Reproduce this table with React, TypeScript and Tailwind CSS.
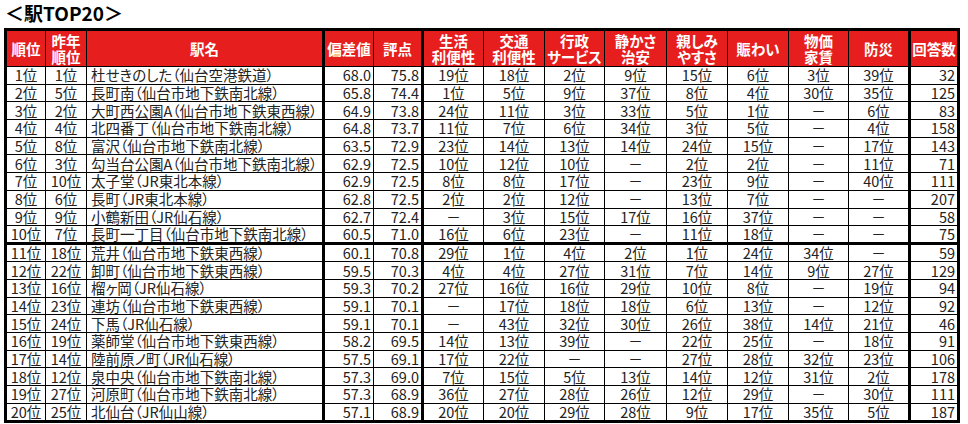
const rows: string[][] = [
  ["1位", "1位", "杜せきのした（仙台空港鉄道）", "68.0", "75.8", "19位", "18位", "2位", "9位", "15位", "6位", "3位", "39位", "32"],
  ["2位", "5位", "長町南（仙台市地下鉄南北線）", "65.8", "74.4", "1位", "5位", "9位", "37位", "8位", "4位", "30位", "35位", "125"],
  ["3位", "2位", "大町西公園A（仙台市地下鉄東西線）", "64.9", "73.8", "24位", "11位", "3位", "33位", "5位", "1位", "－", "6位", "83"],
  ["4位", "4位", "北四番丁（仙台市地下鉄南北線）", "64.8", "73.7", "11位", "7位", "6位", "34位", "3位", "5位", "－", "4位", "158"],
  ["5位", "8位", "富沢（仙台市地下鉄南北線）", "63.5", "72.9", "23位", "14位", "13位", "14位", "24位", "15位", "－", "17位", "143"],
  ["6位", "3位", "勾当台公園A（仙台市地下鉄南北線）", "62.9", "72.5", "10位", "12位", "10位", "－", "2位", "2位", "－", "11位", "71"],
  ["7位", "10位", "太子堂（JR東北本線）", "62.9", "72.5", "8位", "8位", "17位", "－", "23位", "9位", "－", "40位", "111"],
  ["8位", "6位", "長町（JR東北本線）", "62.8", "72.5", "2位", "2位", "12位", "－", "13位", "7位", "－", "－", "207"],
  ["9位", "9位", "小鶴新田（JR仙石線）", "62.7", "72.4", "－", "3位", "15位", "17位", "16位", "37位", "－", "－", "58"],
  ["10位", "7位", "長町一丁目（仙台市地下鉄南北線）", "60.5", "71.0", "16位", "6位", "23位", "－", "11位", "18位", "－", "－", "75"],
  ["11位", "18位", "荒井（仙台市地下鉄東西線）", "60.1", "70.8", "29位", "1位", "4位", "2位", "1位", "24位", "34位", "－", "59"],
  ["12位", "22位", "卸町（仙台市地下鉄東西線）", "59.5", "70.3", "4位", "4位", "27位", "31位", "7位", "14位", "9位", "27位", "129"],
  ["13位", "16位", "榴ヶ岡（JR仙石線）", "59.3", "70.2", "27位", "16位", "16位", "29位", "10位", "8位", "－", "19位", "94"],
  ["14位", "23位", "連坊（仙台市地下鉄東西線）", "59.1", "70.1", "－", "17位", "18位", "18位", "6位", "13位", "－", "12位", "92"],
  ["15位", "24位", "下馬（JR仙石線）", "59.1", "70.1", "－", "43位", "32位", "30位", "26位", "38位", "14位", "21位", "46"],
  ["16位", "19位", "薬師堂（仙台市地下鉄東西線）", "58.2", "69.5", "14位", "13位", "39位", "－", "22位", "25位", "－", "18位", "91"],
  ["17位", "14位", "陸前原ノ町（JR仙石線）", "57.5", "69.1", "17位", "22位", "－", "－", "27位", "28位", "32位", "23位", "106"],
  ["18位", "12位", "泉中央（仙台市地下鉄南北線）", "57.3", "69.0", "7位", "15位", "5位", "13位", "14位", "12位", "31位", "2位", "178"],
  ["19位", "27位", "河原町（仙台市地下鉄南北線）", "57.3", "68.9", "36位", "27位", "28位", "26位", "12位", "29位", "－", "30位", "111"],
  ["20位", "25位", "北仙台（JR仙山線）", "57.1", "68.9", "20位", "20位", "29位", "28位", "9位", "17位", "35位", "5位", "187"],
];

const headers: string[][] = [
  ["順位"],
  ["昨年", "順位"],
  ["駅名"],
  ["偏差値"],
  ["評点"],
  ["生活", "利便性"],
  ["交通", "利便性"],
  ["行政", "サービス"],
  ["静かさ", "治安"],
  ["親しみ", "やすさ"],
  ["賑わい"],
  ["物価", "家賃"],
  ["防災"],
  ["回答数"],
];

const widths = [40, 41, 237, 50, 49, 61, 61, 60, 62, 61, 61, 60, 61, 49];

// per-column alignment + thick edges
const colClass = [
  "text-center border-l-[3px]",
  "text-center",
  "text-left pl-[4px] border-r-[3px]",
  "text-right pr-[2px]",
  "text-right pr-[2px] border-r-[3px]",
  "text-center",
  "text-center",
  "text-center",
  "text-center",
  "text-center",
  "text-center",
  "text-center",
  "text-center",
  "text-right pr-[2px] border-l-[3px] border-r-[3px]",
];

export default function App() {
  return (
    <div
      className="h-[424px] w-[968px] overflow-hidden bg-white text-[#222] [font-feature-settings:'palt']"
      style={{ fontFamily: '"Noto Sans CJK JP", "Liberation Sans", sans-serif' }}
    >
      <div className="h-[28px] pl-[5px] pt-[1px] text-[19px] font-bold leading-[24px] text-black">＜駅TOP20＞</div>
      <table className="ml-[4px] table-fixed border-collapse" style={{ width: 953 }}>
        <colgroup>
          {widths.map((w, i) => (
            <col key={i} style={{ width: w }} />
          ))}
        </colgroup>
        <thead>
          <tr className="h-[37px]">
            {headers.map((h, i) => (
              <th
                key={i}
                className={`border border-t-[3px] border-black bg-[#e61e1e] p-0 text-center text-[14.5px] font-bold leading-[16px] text-white ${
                  i === 0 ? "border-l-[3px]" : ""
                } ${i === 2 || i === 4 || i === 13 ? "border-r-[3px]" : ""} ${i === 13 ? "border-l-[3px]" : ""}`}
              >
                {h.map((line, j) => (
                  <div key={j}>{line}</div>
                ))}
              </th>
            ))}
          </tr>
        </thead>
        <tbody>
          {rows.map((r, ri) => (
            <tr key={ri} className="h-[17.7px]">
              {r.map((c, ci) => (
                <td
                  key={ci}
                  className={`whitespace-nowrap border border-black p-0 text-[14.5px] leading-[16px] ${colClass[ci]} ${
                    ri === 9 || ri === 19 ? "border-b-[3px]" : ""
                  }`}
                >
                  {c}
                </td>
              ))}
            </tr>
          ))}
        </tbody>
      </table>
    </div>
  );
}
